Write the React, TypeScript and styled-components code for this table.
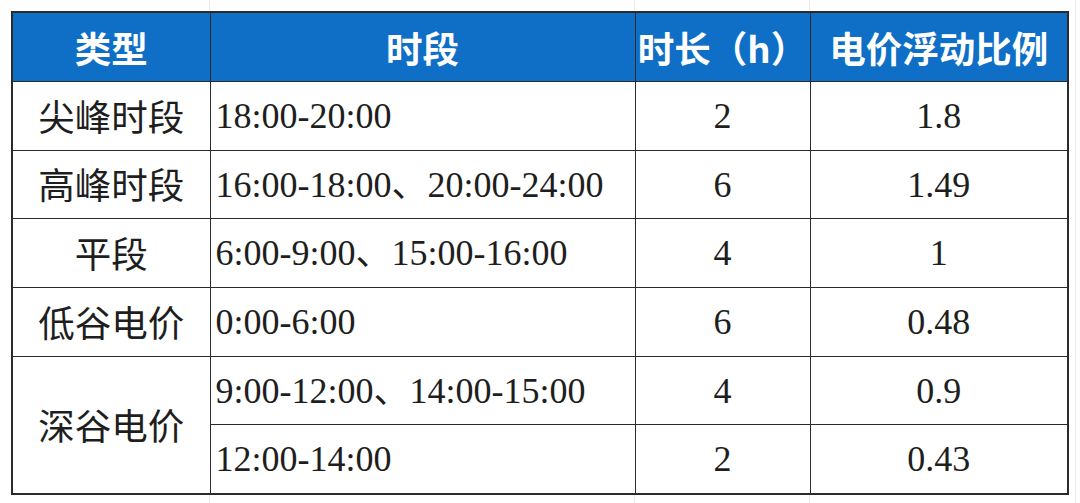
import styled, { createGlobalStyle } from "styled-components";

const Global = createGlobalStyle`
  html, body {
    margin: 0;
    padding: 0;
    background: #fff;
  }
`;

// faint spreadsheet grid behind the table
const Sheet = styled.div`
  width: 1080px;
  height: 503px;
  box-sizing: border-box;
  padding: 11px 0 0 11px;
  background-color: #fff;
  background-image:
    linear-gradient(#ececec, #ececec),
    linear-gradient(#ececec, #ececec),
    linear-gradient(#ececec, #ececec),
    linear-gradient(#ececec, #ececec);
  background-size: 1px 100%;
  background-repeat: no-repeat;
  background-position: 209px 0, 634px 0, 809px 0, 1075px 0;
`;

const Table = styled.table`
  border-collapse: collapse;
  table-layout: fixed;
  width: 1056px;
  background: #fff;
  border: 2px solid #2b2b2b;
`;

const HeadCell = styled.th`
  height: 68px;
  padding: 0;
  background: #0f6fc6;
  color: #fff;
  font-family: "Noto Sans CJK SC", sans-serif;
  font-weight: 700;
  font-size: 36.5px;
  text-align: center;
  border: 1.5px solid #2b2b2b;
`;

const Cell = styled.td<{ $align?: "left" | "center"; $cjk?: boolean }>`
  height: 67.7px;
  padding: 0 0 0 ${(p) => (p.$align === "left" ? "5px" : "0")};
  border: 1.5px solid #2b2b2b;
  color: #1e1e1e;
  line-height: 1;
  text-align: ${(p) => p.$align ?? "center"};
  font-family: ${(p) =>
    p.$cjk
      ? `"Noto Sans CJK SC", sans-serif`
      : `"Liberation Serif", "Noto Sans CJK SC", serif`};
  font-size: ${(p) => (p.$cjk ? "36.5px" : "36px")};
  white-space: nowrap;
`;

type Row = {
  type?: string;
  span?: number;
  period: string;
  hours: string;
  ratio: string;
};

const rows: Row[] = [
  { type: "尖峰时段", period: "18:00-20:00", hours: "2", ratio: "1.8" },
  { type: "高峰时段", period: "16:00-18:00、20:00-24:00", hours: "6", ratio: "1.49" },
  { type: "平段", period: "6:00-9:00、15:00-16:00", hours: "4", ratio: "1" },
  { type: "低谷电价", period: "0:00-6:00", hours: "6", ratio: "0.48" },
  { type: "深谷电价", span: 2, period: "9:00-12:00、14:00-15:00", hours: "4", ratio: "0.9" },
  { period: "12:00-14:00", hours: "2", ratio: "0.43" },
];

export default function App() {
  return (
    <>
      <Global />
      <Sheet>
        <Table>
          <colgroup>
            <col style={{ width: 198 }} />
            <col style={{ width: 425 }} />
            <col style={{ width: 175 }} />
            <col style={{ width: 258 }} />
          </colgroup>
          <thead>
            <tr>
              <HeadCell>类型</HeadCell>
              <HeadCell>时段</HeadCell>
              <HeadCell>时长（h）</HeadCell>
              <HeadCell>电价浮动比例</HeadCell>
            </tr>
          </thead>
          <tbody>
            {rows.map((r, i) => (
              <tr key={i}>
                {r.type && (
                  <Cell $cjk rowSpan={r.span}>
                    {r.type}
                  </Cell>
                )}
                <Cell $align="left">{r.period}</Cell>
                <Cell>{r.hours}</Cell>
                <Cell>{r.ratio}</Cell>
              </tr>
            ))}
          </tbody>
        </Table>
      </Sheet>
    </>
  );
}
